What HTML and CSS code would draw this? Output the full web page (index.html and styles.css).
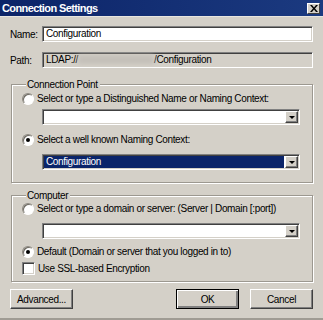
FILE: index.html
```
<!DOCTYPE html>
<html>
<head>
<meta charset="utf-8">
<link rel="stylesheet" href="styles.css">
</head>
<body>
<div class="window">
  <div class="titlebar">
    <span class="title">Connection Settings</span>
    <span class="close"><svg width="8" height="7" viewBox="0 0 8 7"><path d="M0 0h2l2 2.5L6 0h2L5 3.5 8 7H6L4 4.5 2 7H0l3-3.5z" fill="#000"/></svg></span>
  </div>
  <div class="content">
    <div class="row">
      <span class="label">Name:</span>
      <div class="edit">Configuration</div>
    </div>
    <div class="row row-path">
      <span class="label">Path:</span>
      <div class="edit disabled">LDAP://<span class="blur"></span>/Configuration</div>
    </div>

    <fieldset class="group g1">
      <legend>Connection Point</legend>
      <div class="opt"><span class="radio"></span><span>Select or type a Distinguished Name or Naming Context:</span></div>
      <div class="combo c1"><div class="field"></div><span class="drop"><span class="tri"></span></span></div>
      <div class="opt o2"><span class="radio on"></span><span>Select a well known Naming Context:</span></div>
      <div class="combo c2"><div class="field sel">Configuration</div><span class="drop"><span class="tri"></span></span></div>
    </fieldset>

    <fieldset class="group g2">
      <legend>Computer</legend>
      <div class="opt"><span class="radio"></span><span>Select or type a domain or server: (Server | Domain [:port])</span></div>
      <div class="combo c3"><div class="field"></div><span class="drop"><span class="tri"></span></span></div>
      <div class="opt o4"><span class="radio on"></span><span>Default (Domain or server that you logged in to)</span></div>
      <div class="opt o5"><span class="check"></span><span>Use SSL-based Encryption</span></div>
    </fieldset>

    <div class="buttons">
      <button class="btn">Advanced...</button>
      <span class="spacer"></span>
      <button class="btn default">OK</button>
      <button class="btn">Cancel</button>
    </div>
  </div>
</div>
</body>
</html>
```
FILE: styles.css
```
html, body {
  margin: 0;
  padding: 0;
  background: #d4d0c8;
}
.window {
  width: 323px;
  height: 320px;
  box-sizing: border-box;
  background: #d4d0c8;
  font-family: "Liberation Sans", Arial, sans-serif;
  font-size: 10px;
  letter-spacing: -0.35px;
  color: #000;
  border-bottom: 2px solid #a09c94;
  overflow: hidden;
}
.titlebar {
  height: 16px;
  background: linear-gradient(to right, #0c2468, #1b3a80);
  display: flex;
  align-items: center;
  justify-content: space-between;
  padding: 0 3px 0 2px;
  border-bottom: 1px solid #e8e6e0;
}
.title {
  color: #fff;
  font-weight: bold;
  font-size: 11px;
  letter-spacing: -0.6px;
}
.close {
  width: 13px;
  height: 11px;
  box-sizing: border-box;
  background: #d4d0c8;
  border: 1px solid;
  border-color: #fff #404040 #404040 #fff;
  display: flex;
  align-items: center;
  justify-content: center;
}
.content {
  padding: 9px 10px 0 10px;
}
.row {
  display: flex;
  align-items: center;
  height: 16px;
}
.row-path {
  margin-top: 10px;
}
.label {
  width: 32px;
}
.edit {
  flex: 1;
  height: 16px;
  box-sizing: border-box;
  background: #fff;
  border: 1px solid;
  border-color: #808080 #fff #fff #808080;
  box-shadow: inset 1px 1px #404040, inset -1px -1px #d4d0c8;
  padding: 0 3px;
  line-height: 14px;
  white-space: nowrap;
}
.edit.disabled {
  background: #d4d0c8;
}
.blur {
  display: inline-block;
  width: 76px;
  height: 9px;
  vertical-align: -1px;
  background: #c4c0b9;
  filter: blur(2px);
}
.group {
  margin: 10px 0 0 1px;
  border: 1px solid #9c9890;
  box-shadow: inset 1px 1px #fff, 1px 1px #fff;
  padding: 1px 12px 12px 10px;
}
.group legend {
  padding: 0 2px 0 1px;
  margin-left: 4px;
  line-height: 13px;
  background: #d4d0c8;
}
.g2 {
  margin-top: 6px;
  padding-top: 0;
  padding-bottom: 6px;
}
.opt {
  display: flex;
  align-items: center;
  height: 13px;
  gap: 3px;
  white-space: nowrap;
}
.o2 { margin-top: 8px; }
.o4 { margin-top: 6px; }
.o5 { margin-top: 4px; }
.radio {
  width: 12px;
  height: 12px;
  box-sizing: border-box;
  border-radius: 50%;
  background: #fff;
  border: 1px solid;
  border-color: #8c8880 #fff #fff #8c8880;
  box-shadow: inset 1px 1px #6c6860;
  display: flex;
  align-items: center;
  justify-content: center;
  flex: none;
}
.radio.on::after {
  content: "";
  width: 4px;
  height: 4px;
  border-radius: 50%;
  background: #000;
}
.check {
  width: 13px;
  height: 13px;
  box-sizing: border-box;
  background: #fff;
  border: 1px solid;
  border-color: #808080 #fff #fff #808080;
  box-shadow: inset 1px 1px #404040, inset -1px -1px #d4d0c8;
  flex: none;
}
.combo {
  display: flex;
  height: 16px;
  width: 258px;
  margin: 4px 0 0 20px;
  box-sizing: border-box;
  background: #fff;
  border: 1px solid;
  border-color: #808080 #fff #fff #808080;
  box-shadow: inset 1px 1px #404040, inset -1px -1px #d4d0c8;
  padding: 1px;
}
.c2, .c3 { margin-top: 8px; }
.field {
  flex: 1;
  line-height: 12px;
  padding: 0 2px;
  margin: 0 2px 0 1px;
}
.field.sel {
  background: #0a246a;
  color: #fff;
  margin: 0 1px 0 0;
}
.drop {
  width: 13px;
  box-sizing: border-box;
  background: #d4d0c8;
  border: 1px solid;
  border-color: #fff #404040 #404040 #fff;
  box-shadow: inset -1px -1px #808080;
  display: flex;
  align-items: center;
  justify-content: center;
}
.tri {
  width: 0;
  height: 0;
  border-left: 3px solid transparent;
  border-right: 3px solid transparent;
  border-top: 3px solid #000;
}
.buttons {
  display: flex;
  margin-top: 7px;
  gap: 11px;
}
.spacer { flex: 1; }
.btn {
  width: 63px;
  height: 20px;
  box-sizing: border-box;
  font-family: "Liberation Sans", Arial, sans-serif;
  font-size: 10px;
  letter-spacing: -0.35px;
  color: #000;
  background: #d4d0c8;
  border: 1px solid;
  border-color: #fff #404040 #404040 #fff;
  box-shadow: inset -1px -1px #808080;
  padding: 0;
  margin: 0;
}
.btn.default {
  border: 1px solid #000;
  box-shadow: inset 1px 1px #fff, inset -2px -2px #808080, inset -1px -1px #404040;
}
```
